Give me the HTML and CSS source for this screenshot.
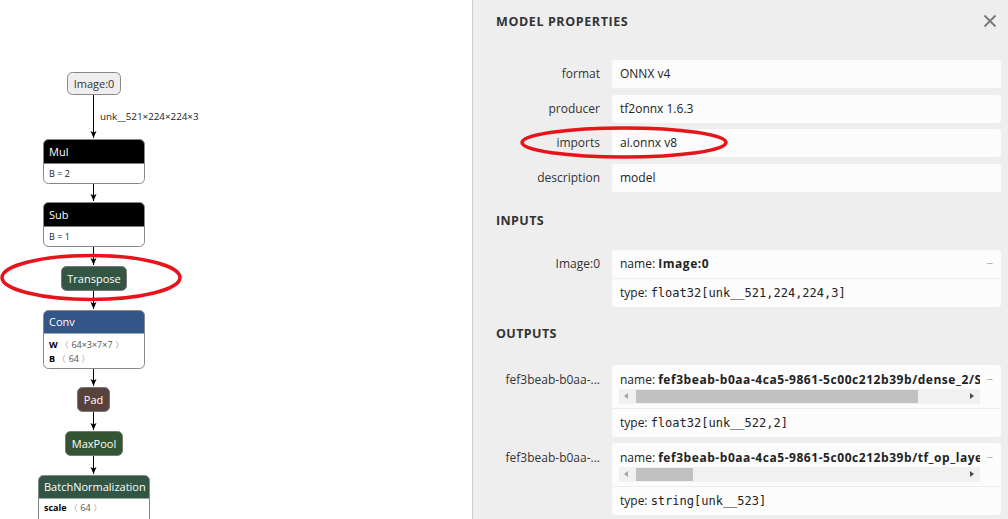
FILE: index.html
```html
<!DOCTYPE html>
<html>
<head>
<meta charset="utf-8">
<link rel="stylesheet" href="styles.css">
</head>
<body>
<div class="app">
  <div class="graph">
    <svg class="graph-svg" width="472" height="519" viewBox="0 0 472 519">
      <defs>
        <marker id="arrow" markerWidth="8" markerHeight="8" refX="7" refY="4" orient="auto" markerUnits="userSpaceOnUse">
          <path d="M0,1 L7,4 L0,7 L1.5,4 Z" fill="#000"/>
        </marker>
      </defs>
      <g class="edges">
        <line x1="93.5" y1="94" x2="93.5" y2="138" marker-end="url(#arrow)"/>
        <line x1="93.5" y1="183" x2="93.5" y2="201" marker-end="url(#arrow)"/>
        <line x1="93.5" y1="246" x2="93.5" y2="265" marker-end="url(#arrow)"/>
        <line x1="93.5" y1="290" x2="93.5" y2="309" marker-end="url(#arrow)"/>
        <line x1="93.5" y1="368" x2="93.5" y2="386" marker-end="url(#arrow)"/>
        <line x1="93.5" y1="411" x2="93.5" y2="430" marker-end="url(#arrow)"/>
        <line x1="93.5" y1="455" x2="93.5" y2="474" marker-end="url(#arrow)"/>
      </g>
      <text class="edge-label" x="100" y="120">unk__521×224×224×3</text>

      <g class="node">
        <rect class="n-input" x="67.5" y="72.5" width="53" height="22" rx="5"/>
        <text class="n-text dark" x="94" y="87.5" text-anchor="middle">Image:0</text>
      </g>

      <g class="node">
        <rect class="n-body" x="43.5" y="139.5" width="101" height="44" rx="5"/>
        <path class="n-head" fill="#000" d="M43.5,163.5 V144.5 a5,5 0 0 1 5,-5 H139.5 a5,5 0 0 1 5,5 V163.5 Z"/>
        <rect class="n-outline" x="43.5" y="139.5" width="101" height="44" rx="5"/>
        <text class="n-text" x="49" y="155.5">Mul</text>
        <text class="n-attr" x="49" y="177">B = 2</text>
      </g>

      <g class="node">
        <rect class="n-body" x="43.5" y="202.5" width="101" height="44" rx="5"/>
        <path class="n-head" fill="#000" d="M43.5,226.5 V207.5 a5,5 0 0 1 5,-5 H139.5 a5,5 0 0 1 5,5 V226.5 Z"/>
        <rect class="n-outline" x="43.5" y="202.5" width="101" height="44" rx="5"/>
        <text class="n-text" x="49" y="218.5">Sub</text>
        <text class="n-attr" x="49" y="240">B = 1</text>
      </g>

      <g class="node">
        <rect class="n-single" fill="#335544" x="61.5" y="266.5" width="65" height="24" rx="5"/>
        <text class="n-text" x="94" y="282.5" text-anchor="middle">Transpose</text>
      </g>

      <g class="node">
        <rect class="n-body" x="43.5" y="310.5" width="101" height="58" rx="5"/>
        <path class="n-head" fill="#335588" d="M43.5,333.5 V315.5 a5,5 0 0 1 5,-5 H139.5 a5,5 0 0 1 5,5 V333.5 Z"/>
        <rect class="n-outline" x="43.5" y="310.5" width="101" height="58" rx="5"/>
        <text class="n-text" x="49" y="326">Conv</text>
        <text class="n-attr" x="49" y="348"><tspan class="b">W</tspan><tspan class="v"> 〈 64×3×7×7 〉</tspan></text>
        <text class="n-attr" x="49" y="362"><tspan class="b">B</tspan><tspan class="v"> 〈 64 〉</tspan></text>
      </g>

      <g class="node">
        <rect class="n-single" fill="#59423b" x="77.5" y="387.5" width="32" height="24" rx="5"/>
        <text class="n-text" x="93.5" y="403.5" text-anchor="middle">Pad</text>
      </g>

      <g class="node">
        <rect class="n-single" fill="#335533" x="65.5" y="431.5" width="57" height="24" rx="5"/>
        <text class="n-text" x="94" y="447.5" text-anchor="middle">MaxPool</text>
      </g>

      <g class="node">
        <rect class="n-body" x="38.5" y="475.5" width="111" height="60" rx="5"/>
        <path class="n-head" fill="#335544" d="M38.5,498.5 V480.5 a5,5 0 0 1 5,-5 H144.5 a5,5 0 0 1 5,5 V498.5 Z"/>
        <rect class="n-outline" x="38.5" y="475.5" width="111" height="60" rx="5"/>
        <text class="n-text" x="44" y="491">BatchNormalization</text>
        <text class="n-attr" x="44" y="511"><tspan class="b">scale</tspan><tspan class="v"> 〈 64 〉</tspan></text>
      </g>
    </svg>
  </div>

  <aside class="sidebar">
    <header class="side-header">
      <h1 class="side-title">MODEL PROPERTIES</h1>
      <button class="close" aria-label="close">
        <svg width="14" height="14" viewBox="0 0 14 14"><path d="M1.5,1.5 L12.5,12.5 M12.5,1.5 L1.5,12.5" stroke="#777" stroke-width="1.8" fill="none"/></svg>
      </button>
    </header>

    <div class="props">
      <div class="prop"><div class="prop-label">format</div><div class="prop-value">ONNX v4</div></div>
      <div class="prop"><div class="prop-label">producer</div><div class="prop-value">tf2onnx 1.6.3</div></div>
      <div class="prop"><div class="prop-label">imports</div><div class="prop-value">ai.onnx v8</div></div>
      <div class="prop"><div class="prop-label">description</div><div class="prop-value">model</div></div>
    </div>

    <h2 class="section-title inputs-title">INPUTS</h2>
    <div class="props">
      <div class="prop">
        <div class="prop-label">Image:0</div>
        <div class="arg">
          <div class="arg-row arg-name">
            <div class="arg-text">name: <b>Image:0</b></div>
            <span class="expander">−</span>
          </div>
          <div class="arg-row arg-type">type: <code>float32[unk__521,224,224,3]</code></div>
        </div>
      </div>
    </div>

    <h2 class="section-title outputs-title">OUTPUTS</h2>
    <div class="props outputs">
      <div class="prop">
        <div class="prop-label">fef3beab-b0aa-...</div>
        <div class="arg">
          <div class="arg-row arg-name scrolling">
            <div class="arg-main">
              <div class="arg-text">name: <b>fef3beab-b0aa-4ca5-9861-5c00c212b39b/dense_2/Softmax:0</b></div>
              <div class="hscroll">
                <span class="tri left"></span>
                <div class="track"><div class="thumb" style="width:282px"></div></div>
                <span class="tri right"></span>
              </div>
            </div>
            <span class="expander">−</span>
          </div>
          <div class="arg-row arg-type">type: <code>float32[unk__522,2]</code></div>
        </div>
      </div>
      <div class="prop">
        <div class="prop-label">fef3beab-b0aa-...</div>
        <div class="arg">
          <div class="arg-row arg-name scrolling">
            <div class="arg-main">
              <div class="arg-text">name: <b>fef3beab-b0aa-4ca5-9861-5c00c212b39b/tf_op_layer_ArgMax/ArgMax:0</b></div>
              <div class="hscroll">
                <span class="tri left"></span>
                <div class="track"><div class="thumb" style="width:57px"></div></div>
                <span class="tri right"></span>
              </div>
            </div>
            <span class="expander">−</span>
          </div>
          <div class="arg-row arg-type">type: <code>string[unk__523]</code></div>
        </div>
      </div>
    </div>
  </aside>

  <svg class="marks" width="1008" height="519" viewBox="0 0 1008 519">
    <ellipse cx="91" cy="277.5" rx="89" ry="22" />
    <ellipse cx="624" cy="142.5" rx="102" ry="14.5" />
  </svg>
</div>
</body>
</html>
```

FILE: styles.css
```css
* { box-sizing: border-box; }
html, body { margin: 0; padding: 0; }
body {
  font-family: "Open Sans", "Noto Sans", sans-serif;
  font-size: 12px;
  color: #222;
  background: #fff;
}
.app {
  position: relative;
  display: flex;
  width: 1008px;
  height: 519px;
  overflow: hidden;
}
.graph {
  width: 472px;
  flex: none;
  background: #fff;
}
.graph-svg { display: block; }
.edges line { stroke: #000; stroke-width: 1; }
.edge-label {
  font-family: "Open Sans", sans-serif;
  font-size: 9.8px;
  fill: #222;
}
.n-input { fill: #eee; stroke: #888; stroke-width: 1; }
.n-body { fill: #fff; }
.n-outline { fill: none; stroke: #888; stroke-width: 1; }
.n-single { stroke: #777; stroke-width: 1; }
.n-text {
  font-family: "Open Sans", sans-serif;
  font-size: 11px;
  fill: #fff;
}
.n-text.dark { fill: #333; }
.n-attr {
  font-family: "Open Sans", sans-serif;
  font-size: 9px;
  fill: #222;
}
.n-attr .b { font-weight: bold; fill: #000; }
.n-attr .v { fill: #555; }

.sidebar {
  flex: 1;
  background: #eee;
  border-left: 1px solid #cfcfcf;
  padding: 0 7px 0 23px;
}
.side-header {
  display: flex;
  align-items: center;
  justify-content: space-between;
  height: 42px;
}
.side-title {
  margin: 0;
  font-size: 12.5px;
  font-weight: bold;
  color: #333;
  letter-spacing: 0.6px;
}
.close {
  border: 0;
  background: none;
  padding: 0;
  margin-right: 4px;
  width: 14px;
  height: 14px;
  display: flex;
}
.props {
  display: flex;
  flex-direction: column;
  gap: 6.5px;
}
.side-header + .props { margin-top: 18px; }
.prop {
  display: grid;
  grid-template-columns: 104px 1fr;
  column-gap: 12px;
}
.prop-label {
  text-align: right;
  line-height: 28px;
  color: #333;
  white-space: nowrap;
  overflow: hidden;
}
.outputs .prop-label { line-height: 18px; padding-top: 6px; }
.prop-value {
  background: #fcfcfc;
  border-radius: 3px;
  height: 28px;
  line-height: 28px;
  padding: 0 8px;
}
.section-title {
  margin: 0;
  font-size: 12.5px;
  font-weight: bold;
  color: #333;
  line-height: 20px;
  letter-spacing: 0.4px;
}
.inputs-title { margin-top: 19.5px; margin-bottom: 19px; }
.outputs-title { margin-top: 16.5px; margin-bottom: 21px; }
.outputs { gap: 6px; }

.arg {
  background: #fcfcfc;
  border-radius: 3px;
  overflow: hidden;
}
.arg-row { padding: 0 5px 0 8px; }
.arg b { letter-spacing: 0.55px; }
.arg-name {
  display: flex;
  justify-content: space-between;
  line-height: 28px;
  border-bottom: 1px solid #eee;
}
.arg-text { white-space: nowrap; overflow: hidden; }
.arg-name.scrolling { line-height: 18px; padding-top: 6px; padding-bottom: 4px; padding-left: 7px; }
.arg-main { width: 361px; overflow: hidden; flex: none; }
.arg-main .arg-text { padding-left: 1px; }
.expander { color: #aaa; width: 12px; text-align: center; flex: none; }
.arg-type { line-height: 27px; }
code {
  font-family: "DejaVu Sans Mono", "Liberation Mono", monospace;
  font-size: 12px;
}
.hscroll {
  display: flex;
  align-items: center;
  height: 15px;
  background: #f1f1f1;
}
.tri { width: 15px; height: 15px; flex: none; position: relative; }
.tri::after {
  content: "";
  position: absolute;
  top: 4px;
  border-top: 3.5px solid transparent;
  border-bottom: 3.5px solid transparent;
}
.tri.left::after { left: 5px; border-right: 4px solid #a3a3a3; }
.tri.right::after { right: 6px; border-left: 4px solid #505050; }
.track { flex: 1; height: 15px; display: flex; align-items: center; padding-left: 2px; }
.thumb { height: 13px; background: #c1c1c1; }

.marks {
  position: absolute;
  left: 0;
  top: 0;
  pointer-events: none;
}
.marks ellipse { fill: none; stroke: #e8141c; stroke-width: 3.5; }
```
